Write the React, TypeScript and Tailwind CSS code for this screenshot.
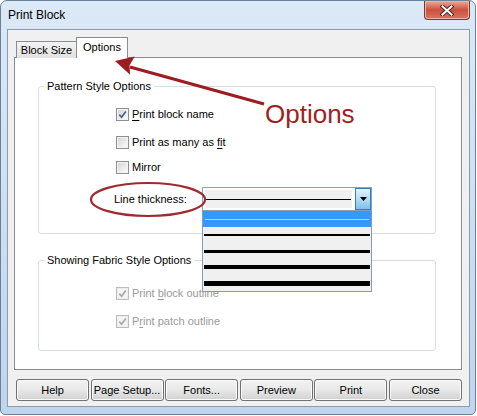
import React from "react";

const sans = "font-['Liberation_Sans',Arial,sans-serif]";

function CheckBox({ checked, disabled }: { checked?: boolean; disabled?: boolean }) {
  return (
    <span
      className={`flex h-[13px] w-[13px] shrink-0 items-center justify-center border bg-white ${
        disabled ? "border-[#bcbcbc]" : "border-[#8e8f8f]"
      }`}
    >
      <span
        className={`flex h-[11px] w-[11px] items-center justify-center border ${
          disabled
            ? "border-[#eeeeee] bg-[#f4f4f4]"
            : "border-[#f4f4f4] bg-gradient-to-br from-[#d6d6d6] to-[#fbfbfb]"
        }`}
      >
        {checked && (
          <svg width="9" height="9" viewBox="0 0 9 9">
            <path
              d="M1.3 4.6 L3.6 7.2 L7.8 1.4"
              fill="none"
              stroke={disabled ? "#a8a8a8" : "#4a5f97"}
              strokeWidth="1.7"
            />
          </svg>
        )}
      </span>
    </span>
  );
}

function Option({
  before,
  key_,
  after,
  checked,
  disabled,
}: {
  before: string;
  key_: string;
  after: string;
  checked?: boolean;
  disabled?: boolean;
}) {
  return (
    <div className="flex h-[13px] items-center gap-[3px]">
      <CheckBox checked={checked} disabled={disabled} />
      <span className={`text-[11px] leading-[13px] ${disabled ? "text-[#9a9a9a]" : "text-black"}`}>
        {before}
        {key_ && <span className="underline underline-offset-[2px]">{key_}</span>}
        {after}
      </span>
    </div>
  );
}

function Button({ label }: { label: string }) {
  return (
    <button className="flex h-[22px] w-[73px] items-center justify-center rounded-[3px] border border-[#707070] bg-gradient-to-b from-[#f3f3f3] via-[#e8e8e8] to-[#d0d0d0] text-[11px] text-black shadow-[inset_0_0_0_1px_#fbfbfb]">
      {label}
    </button>
  );
}

const thickness = [2, 3, 4, 5];

export default function App() {
  return (
    <div className={`relative h-[416px] w-[477px] bg-white ${sans}`}>
      <div className="flex h-[415px] w-[476px] flex-col rounded-t-[7px] rounded-b-[5px] border border-[#6b8099] bg-gradient-to-b from-[#dce9f6] to-[#bed5ed] pb-[7px] pl-[6px] pr-[5px]">
        {/* title bar */}
        <div className="flex h-[28px] items-start justify-between">
          <span className="ml-[1px] mt-[7px] text-[12px] leading-[14px] text-black">Print Block</span>
          <div className="flex h-[19px] w-[46px] items-center justify-center rounded-b-[4px] border border-t-0 border-[#7a3a33] bg-gradient-to-b from-[#e8a898] via-[#c9503c] to-[#da7661] shadow-[inset_0_0_0_1px_#efb3a5]">
            <svg width="14" height="11" viewBox="0 0 14 11">
              <path d="M2.5 1.5 L11.5 9.5 M11.5 1.5 L2.5 9.5" stroke="#4a2a26" strokeWidth="4" strokeLinecap="square" />
              <path d="M2.5 1.5 L11.5 9.5 M11.5 1.5 L2.5 9.5" stroke="#ffffff" strokeWidth="2" strokeLinecap="square" />
            </svg>
          </div>
        </div>

        {/* client area */}
        <div className="flex h-[378px] flex-col border border-[#8a9cb2] bg-[#f0f0f0] pl-[6px] pr-[7px] pt-[7px]">
          {/* tabs */}
          <div className="relative z-10 -mb-px flex h-[21px] items-end pl-[2px]">
            <div className="flex h-[17px] w-[60px] items-center justify-center border border-b-0 border-r-0 border-[#898c95] bg-gradient-to-b from-[#f3f3f3] to-[#e2e2e2] text-[11px] text-black">
              Block Size
            </div>
            <div className="flex h-[21px] w-[52px] items-center justify-center border border-b-0 border-[#898c95] bg-white pb-[1px] text-[11px] text-black">
              Options
            </div>
          </div>

          {/* tab panel */}
          <div className="flex h-[313px] flex-col border border-[#898c95] bg-white pl-[23px] pr-[25px] pt-[22px]">
            <fieldset className="rounded-[3px] border border-[#d5dfe5]">
              <legend className="ml-[5px] px-[3px] text-[11px] leading-[13px] text-black">Pattern Style Options</legend>
              <div className="flex h-[140px] flex-col pl-[77px] pt-[15px]">
                <Option before="" key_="P" after="rint block name" checked />
                <div className="mt-[15px]">
                  <Option before="Print as many as " key_="fi" after="t" />
                </div>
                <div className="mt-[12px]">
                  <Option before="Mirror" key_="" after="" />
                </div>
                <div className="-ml-[2px] mt-[13px] flex items-center">
                  <span className="w-[88px] text-[11px] leading-[13px] text-black">Line thickness:</span>
                  <div className="relative flex h-[24px] w-[170px] border border-[#7ea4cf] bg-white">
                    <div className="my-[2px] ml-[2px] flex w-[147px] items-center bg-[#f0f0f0] px-[1px]">
                      <div className="h-px w-full bg-black" />
                    </div>
                    <div className="ml-[3px] flex w-[16px] items-center justify-center border border-[#3c7fb1] bg-gradient-to-b from-[#e3f2fc] via-[#b4dcf5] to-[#7cc0ea]">
                      <svg width="7" height="4" viewBox="0 0 7 4">
                        <path d="M0 0 H7 L3.5 4 Z" fill="#000" />
                      </svg>
                    </div>
                    {/* open list */}
                    <div className="absolute left-[-1px] top-full z-20 flex w-[170px] flex-col border border-[#8a9ab0] bg-[#f0f0f0]">
                      <div className="flex h-[16px] items-center bg-[#3399ff] px-[2px]">
                        <div className="h-px w-full bg-[#c4ccd4]" />
                      </div>
                      {thickness.map((t) => (
                        <div key={t} className="flex h-[16px] items-center px-[1px]">
                          <div className="w-full bg-black" style={{ height: t }} />
                        </div>
                      ))}
                    </div>
                  </div>
                </div>
              </div>
            </fieldset>

            <fieldset className="mt-[20px] rounded-[3px] border border-[#d5dfe5]">
              <legend className="ml-[5px] px-[3px] text-[11px] leading-[13px] text-black">
                Showing Fabric Style Options
              </legend>
              <div className="flex h-[83px] flex-col pl-[77px] pt-[20px]">
                <Option before="Print " key_="b" after="lock outline" checked disabled />
                <div className="mt-[15px]">
                  <Option before="P" key_="r" after="int patch outline" checked disabled />
                </div>
              </div>
            </fieldset>
          </div>

          {/* buttons */}
          <div className="ml-[2px] mt-[9px] flex justify-between">
            <Button label="Help" />
            <Button label="Page Setup..." />
            <Button label="Fonts..." />
            <Button label="Preview" />
            <Button label="Print" />
            <Button label="Close" />
          </div>
        </div>
      </div>

      {/* annotations */}
      <svg className="pointer-events-none absolute left-0 top-0 z-30" width="477" height="416" viewBox="0 0 477 416">
        <line x1="264" y1="104" x2="130" y2="67" stroke="#9e1c21" strokeWidth="3" />
        <polygon points="115,61 134.7,56.5 129.5,65.5 130.1,74.8" fill="#9e1c21" />
        <ellipse cx="148" cy="199.5" rx="57" ry="16.5" fill="none" stroke="#a02a2e" strokeWidth="2.2" />
      </svg>
      <span className="pointer-events-none absolute left-[265px] top-[101px] z-30 text-[26px] leading-[26px] text-[#a01e22]">
        Options
      </span>
    </div>
  );
}
